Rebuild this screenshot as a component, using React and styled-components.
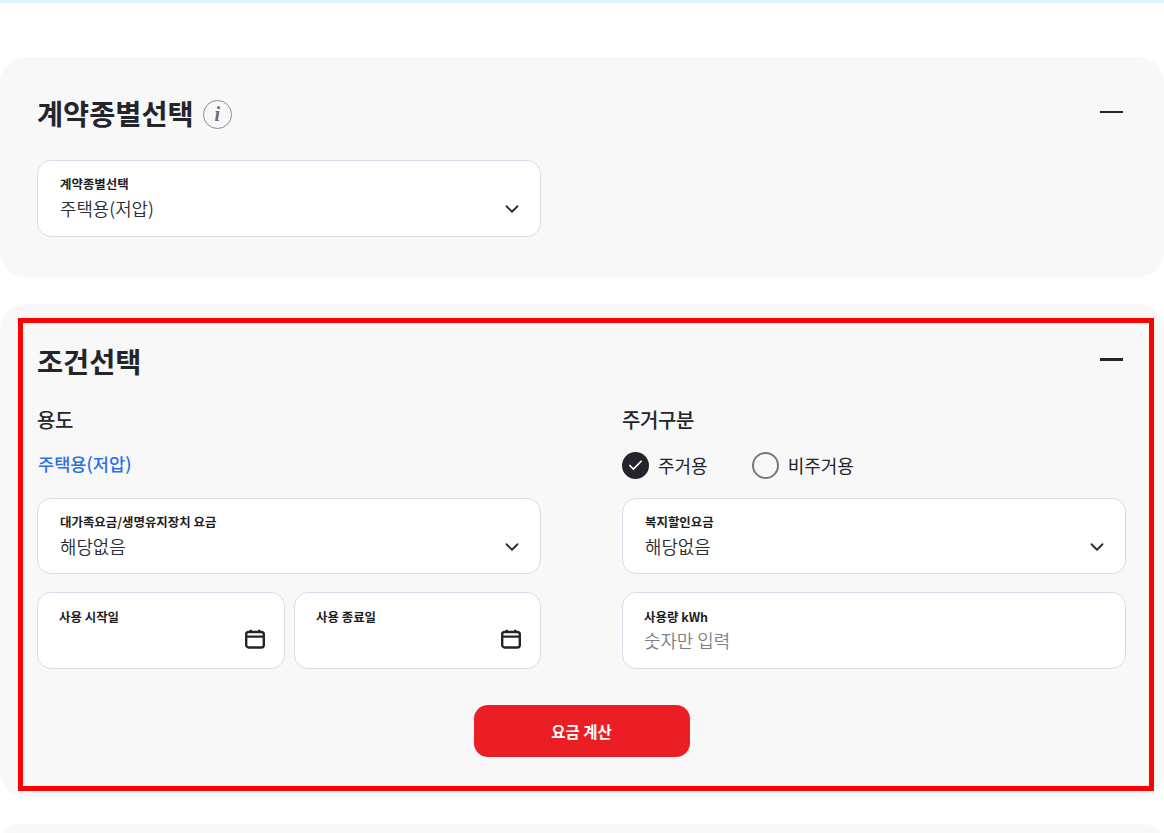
import React from "react";
import styled, { createGlobalStyle } from "styled-components";
import { ChevronDown, Check } from "lucide-react";

const Global = createGlobalStyle`
  html, body { margin: 0; padding: 0; background: #fff; }
  body { font-family: "Noto Sans CJK KR", "Noto Sans", sans-serif; color: #24252a; overflow: hidden; }
  * { box-sizing: border-box; }
`;

const Page = styled.div`
  width: 1164px;
  height: 833px;
  overflow: hidden;
  border-top: 3px solid #dff4fa;
  padding-top: 54px;
  display: flex;
  flex-direction: column;
  gap: 27px;
`;

const Panel = styled.section`
  position: relative;
  flex: none;
  height: ${(p) => p.$height}px;
  background: #f8f8f9;
  border-radius: 26px;
  padding: ${(p) => p.$top}px 38px 0 37px;
`;

const Highlight = styled.div`
  position: absolute;
  left: 18px;
  right: 10px;
  top: 14px;
  bottom: 6px;
  border: 5px solid #ff0000;
  pointer-events: none;
`;

const Head = styled.header`
  display: flex;
  align-items: center;
  justify-content: space-between;
  height: 42px;
`;

const TitleWrap = styled.div`
  display: flex;
  align-items: center;
  gap: 9px;
`;

const Title = styled.h2`
  margin: 0;
  font-size: 28.4px;
  line-height: 42px;
  font-weight: 700;
  color: #24252a;
`;

const Info = styled.span`
  width: 29px;
  height: 29px;
  margin-top: 2px;
  border-radius: 50%;
  border: 1.5px solid #8b8c90;
  display: flex;
  align-items: center;
  justify-content: center;
  font: italic 700 20px/1 "Liberation Serif", serif;
  color: #6c6d72;
`;

const Dash = styled.span`
  width: 23px;
  height: ${(p) => p.$weight}px;
  background: #24252a;
  margin: ${(p) => p.$offset}px 3px 0 0;
`;

const Field = styled.div`
  position: relative;
  height: ${(p) => p.$h || 76}px;
  background: #fff;
  border: 1px solid #d9dce8;
  border-radius: 14px;
  padding: ${(p) => (p.$tight ? "15px 21px 0" : "14px 22px 0")};
  min-width: 0;
`;

const Label = styled.div`
  font-size: 12.45px;
  line-height: 18px;
  font-weight: 700;
  color: #1d1e22;
  white-space: nowrap;
`;

const Value = styled.div`
  margin-top: ${(p) => (p.$muted ? 1 : 2)}px;
  font-size: 17.85px;
  line-height: 27px;
  font-weight: 350;
  color: ${(p) => (p.$muted ? "#7d7f85" : "#2b2c31")};
  white-space: nowrap;
`;

const Chevron = styled(ChevronDown)`
  position: absolute;
  right: 17px;
  top: 37px;
  color: #2b2c31;
`;

const CalendarSvg = styled.svg`
  position: absolute;
  right: 18px;
  top: 35px;
  color: #24252a;
`;

const Calendar = () => (
  <CalendarSvg width="22" height="22" viewBox="0 0 22 22" fill="none" stroke="currentColor" strokeWidth="2.4">
    <rect x="2.2" y="4" width="17.6" height="15.5" rx="2.5" />
    <path d="M2 8.6h18M6.8 1.8v3M15.2 1.8v3" />
  </CalendarSvg>
);

const FirstField = styled.div`
  width: 504px;
  margin-top: 26px;
  & > div {
    height: 77px;
  }
`;

const Columns = styled.div`
  display: grid;
  grid-template-columns: 504px 504px;
  column-gap: 81px;
  margin-top: 23px;
`;

const Column = styled.div`
  display: flex;
  flex-direction: column;
`;

const Subhead = styled.h3`
  margin: 0;
  font-size: 20px;
  line-height: 30px;
  font-weight: 500;
  letter-spacing: -0.4px;
  color: #24252a;
`;

const Usage = styled.div`
  margin-top: 14px;
  height: 30px;
  font-size: 17.6px;
  line-height: 30px;
  font-weight: 500;
  color: #2a6fe8;
  padding-left: 1px;
`;

const RadioRow = styled.div`
  margin-top: 15px;
  height: 30px;
  display: flex;
  align-items: center;
  gap: 44px;
`;

const Radio = styled.label`
  display: flex;
  align-items: center;
  gap: 9px;
  font-size: 18px;
  line-height: 28px;
  font-weight: 400;
  color: #24252a;
`;

const Dot = styled.span`
  width: 27px;
  height: 27px;
  border-radius: 50%;
  display: flex;
  align-items: center;
  justify-content: center;
  background: ${(p) => (p.$on ? "#24252a" : "#f8f8f9")};
  border: ${(p) => (p.$on ? "none" : "2px solid #77787c")};
  color: #fff;
`;

const Stack = styled.div`
  margin-top: ${(p) => p.$top}px;
  display: flex;
  flex-direction: column;
  gap: 18px;
`;

const DateRow = styled.div`
  display: grid;
  grid-template-columns: 248px 247px;
  gap: 9px;
`;

const Actions = styled.div`
  display: flex;
  justify-content: center;
  margin-top: 36px;
`;

const Submit = styled.button`
  width: 216px;
  height: 52px;
  border: none;
  border-radius: 14px;
  background: #ea1e24;
  color: #fff;
  font-family: inherit;
  font-size: 15.5px;
  font-weight: 700;
`;

const Select = ({ label, value }) => (
  <Field>
    <Label>{label}</Label>
    <Value>{value}</Value>
    <Chevron size={22} strokeWidth={2} />
  </Field>
);

const DateField = ({ label }) => (
  <Field $h={77} $tight>
    <Label>{label}</Label>
    <Calendar />
  </Field>
);

export default function App() {
  return (
    <>
      <Global />
      <Page>
        <Panel $height={220} $top={35}>
          <Head>
            <TitleWrap>
              <Title>계약종별선택</Title>
              <Info>i</Info>
            </TitleWrap>
            <Dash $weight={2} $offset={-2} />
          </Head>
          <FirstField>
            <Select label="계약종별선택" value="주택용(저압)" />
          </FirstField>
        </Panel>

        <Panel $height={493} $top={36}>
          <Head>
            <Title>조건선택</Title>
            <Dash $weight={3} $offset={-4} />
          </Head>
          <Columns>
            <Column>
              <Subhead>용도</Subhead>
              <Usage>주택용(저압)</Usage>
              <Stack $top={19}>
                <Select label="대가족요금/생명유지장치 요금" value="해당없음" />
                <DateRow>
                  <DateField label="사용 시작일" />
                  <DateField label="사용 종료일" />
                </DateRow>
              </Stack>
            </Column>
            <Column>
              <Subhead>주거구분</Subhead>
              <RadioRow>
                <Radio>
                  <Dot $on><Check size={17} strokeWidth={2.4} /></Dot>
                  주거용
                </Radio>
                <Radio>
                  <Dot />
                  비주거용
                </Radio>
              </RadioRow>
              <Stack $top={18}>
                <Select label="복지할인요금" value="해당없음" />
                <Field $h={77} $tight>
                  <Label>사용량 kWh</Label>
                  <Value $muted>숫자만 입력</Value>
                </Field>
              </Stack>
            </Column>
          </Columns>
          <Actions>
            <Submit>요금 계산</Submit>
          </Actions>
          <Highlight />
        </Panel>

        <Panel $height={40} $top={0} />
      </Page>
    </>
  );
}
